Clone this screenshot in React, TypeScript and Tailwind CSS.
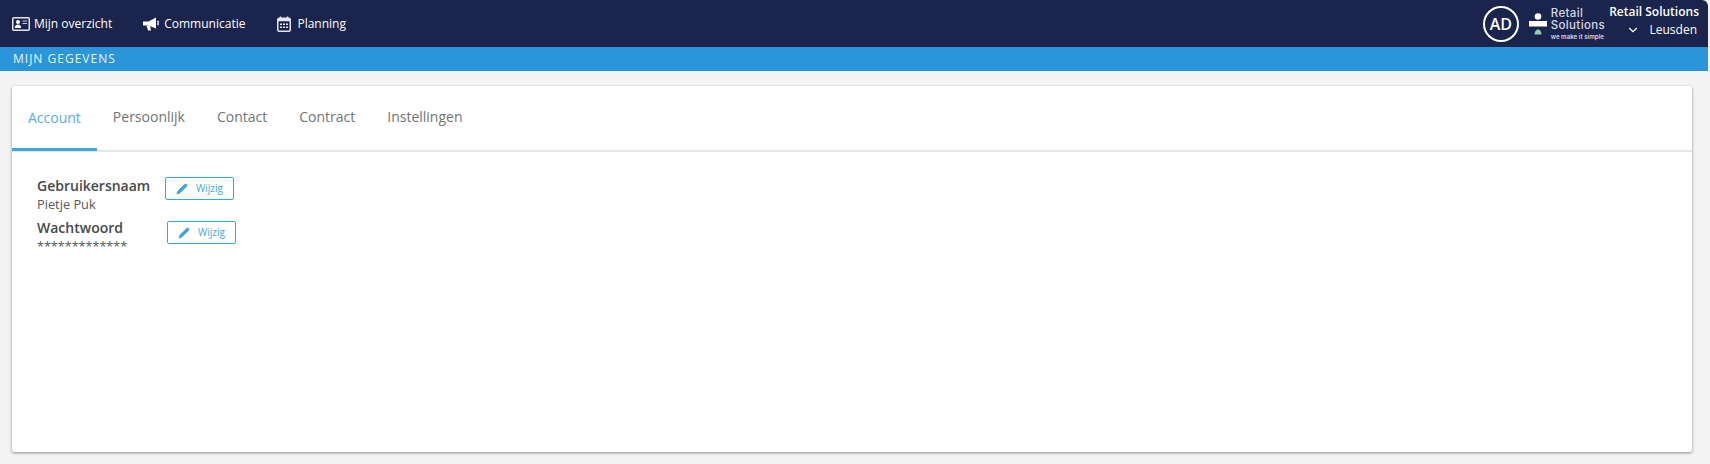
import { ChevronDown, Pencil } from 'lucide-react';

const tabs = ['Account', 'Persoonlijk', 'Contact', 'Contract', 'Instellingen'];

function ContactCardIcon() {
    return (
        <svg width="18" height="14" viewBox="0 0 18 14" className="shrink-0">
            <rect x="0.75" y="0.75" width="16.5" height="12.5" rx="1" fill="none" stroke="#e4e6ee" strokeWidth="1.5" />
            <circle cx="6" cy="5" r="2" fill="#fff" />
            <path d="M2.8 11c0-2.2 1.4-3.4 3.2-3.4S9.2 8.8 9.2 11z" fill="#fff" />
            <path d="M10.5 4h4.5M10.5 6.5h4.5" stroke="#c9ccd8" strokeWidth="1.2" />
        </svg>
    );
}

function MegaphoneIcon() {
    return (
        <svg width="16" height="14" viewBox="0 0 16 14" className="shrink-0">
            <path d="M0 4.5h5.5L13 0.5v11L5.5 8.5H0z" fill="#fff" />
            <path d="M3.5 8.5h3.5l1 5H5z" fill="#fff" />
            <rect x="14.3" y="3.5" width="1.5" height="5" rx="0.7" fill="#e4e6ee" />
        </svg>
    );
}

function CalendarIcon() {
    return (
        <svg width="14" height="16" viewBox="0 0 14 16" className="shrink-0">
            <rect x="0.75" y="2.25" width="12.5" height="13" rx="1.5" fill="none" stroke="#e4e6ee" strokeWidth="1.5" />
            <rect x="0.75" y="2.25" width="12.5" height="3" fill="#e4e6ee" />
            <path d="M3.5 0.5v2.5M10.5 0.5v2.5" stroke="#e4e6ee" strokeWidth="1.5" />
            <path d="M3 7.5h2V9H3zM6 7.5h2V9H6zM9 7.5h2V9H9zM3 10.5h2V12H3zM6 10.5h2V12H6zM9 10.5h2V12H9z" fill="#e4e6ee" />
        </svg>
    );
}

function Logo() {
    return (
        <div className="flex items-center gap-[4px]">
            <svg width="18" height="22" viewBox="0 0 18 22" className="shrink-0">
                <circle cx="9" cy="3.5" r="3.3" fill="#fff" />
                <rect x="0" y="8" width="18" height="5.5" fill="#fff" />
                <path d="M5.5 21.5c0-3 1.5-5 3.5-5s3.5 2 3.5 5z" fill="#8fd0b0" />
            </svg>
            <div className="flex flex-col pt-[1px] text-[#d5d8e2] font-['Inter',sans-serif]">
                <span className="text-[11.5px] leading-[12px] font-medium tracking-[0.35px]">Retail</span>
                <span className="text-[11.5px] leading-[12px] font-medium tracking-[0.35px]">Solutions</span>
                <span className="mt-[1px] text-[6.2px] leading-[10px] font-semibold">we make it simple</span>
            </div>
        </div>
    );
}

function Field({
    label,
    value,
    width,
    valueClass,
    buttonClass,
}: {
    label: string;
    value: string;
    width: string;
    valueClass: string;
    buttonClass: string;
}) {
    return (
        <div className="flex items-start">
            <div className={width}>
                <div className="text-[14px] leading-[19px] font-semibold text-[#45494d]">{label}</div>
                <div className={`leading-[16px] text-[#55595d] ${valueClass}`}>{value}</div>
            </div>
            <button className={`flex h-[23px] w-[69px] items-center justify-center gap-[8px] rounded-[2px] border border-[#3fa6dc] bg-white text-[10px] text-[#3fa6dc] ${buttonClass}`}>
                <Pencil className="h-[12px] w-[12px] fill-[#3fa6dc]" strokeWidth={1.5} />
                Wijzig
            </button>
        </div>
    );
}

export default function App() {
    return (
        <div className="flex h-[464px] flex-col overflow-hidden bg-[#f4f4f4] font-['Open_Sans',sans-serif]">
            <header className="mr-[2px] flex h-[47px] shrink-0 items-center justify-between rounded-tr-[6px] bg-[#1a244c] pl-[12px] pr-[9px] text-white">
                <nav className="flex items-center text-[12px]">
                    <div className="flex items-center gap-[4px]">
                        <ContactCardIcon />
                        <span>Mijn overzicht</span>
                    </div>
                    <div className="ml-[31px] flex items-center gap-[5px]">
                        <MegaphoneIcon />
                        <span>Communicatie</span>
                    </div>
                    <div className="ml-[32px] flex items-center gap-[6px]">
                        <CalendarIcon />
                        <span>Planning</span>
                    </div>
                </nav>
                <div className="flex items-center">
                    <div className="flex h-[36px] w-[36px] items-center justify-center rounded-full border-2 border-white text-[16px] font-semibold">AD</div>
                    <div className="ml-[10px]">
                        <Logo />
                    </div>
                    <div className="ml-[5px] flex w-[89px] flex-col items-end pb-[5px] text-[12px] leading-[18px]">
                        <span className="whitespace-nowrap font-semibold">Retail Solutions</span>
                        <div className="flex items-center gap-[9px] pr-[2px]">
                            <ChevronDown className="h-[14px] w-[14px]" strokeWidth={2} />
                            <span>Leusden</span>
                        </div>
                    </div>
                </div>
            </header>
            <div className="mr-[2px] flex h-[24px] shrink-0 items-center bg-[#2b95da] pl-[13px] text-[12px] tracking-[1px] text-[#e6f3fb]">
                MIJN GEGEVENS
            </div>
            <main className="mt-[15px] mb-[12px] ml-[12px] mr-[18px] flex flex-1 flex-col rounded-[2px] bg-white shadow-[0_1px_3px_rgba(0,0,0,0.45)]">
                <div className="flex h-[66px] border-b-2 border-[#e6e6e6] text-[14px]">
                    {tabs.map((tab, i) => (
                        <div
                            key={tab}
                            className={
                                i === 0
                                    ? 'flex h-[65px] items-center border-b-[3px] border-[#41a7dc] px-[16px] text-[#58ade0]'
                                    : 'flex h-[64px] items-center px-[16px] pb-[3px] text-[#6f7477]'
                            }
                        >
                            {tab}
                        </div>
                    ))}
                </div>
                <div className="flex flex-col gap-[6px] pl-[25px] pt-[24px]">
                    <Field label="Gebruikersnaam" value="Pietje Puk" width="w-[128px]" valueClass="mt-[1px] text-[12.8px]" buttonClass="mt-[1px]" />
                    <Field label="Wachtwoord" value="*************" width="w-[130px]" valueClass="mt-[2px] text-[12.6px]" buttonClass="mt-[3px]" />
                </div>
            </main>
        </div>
    );
}
